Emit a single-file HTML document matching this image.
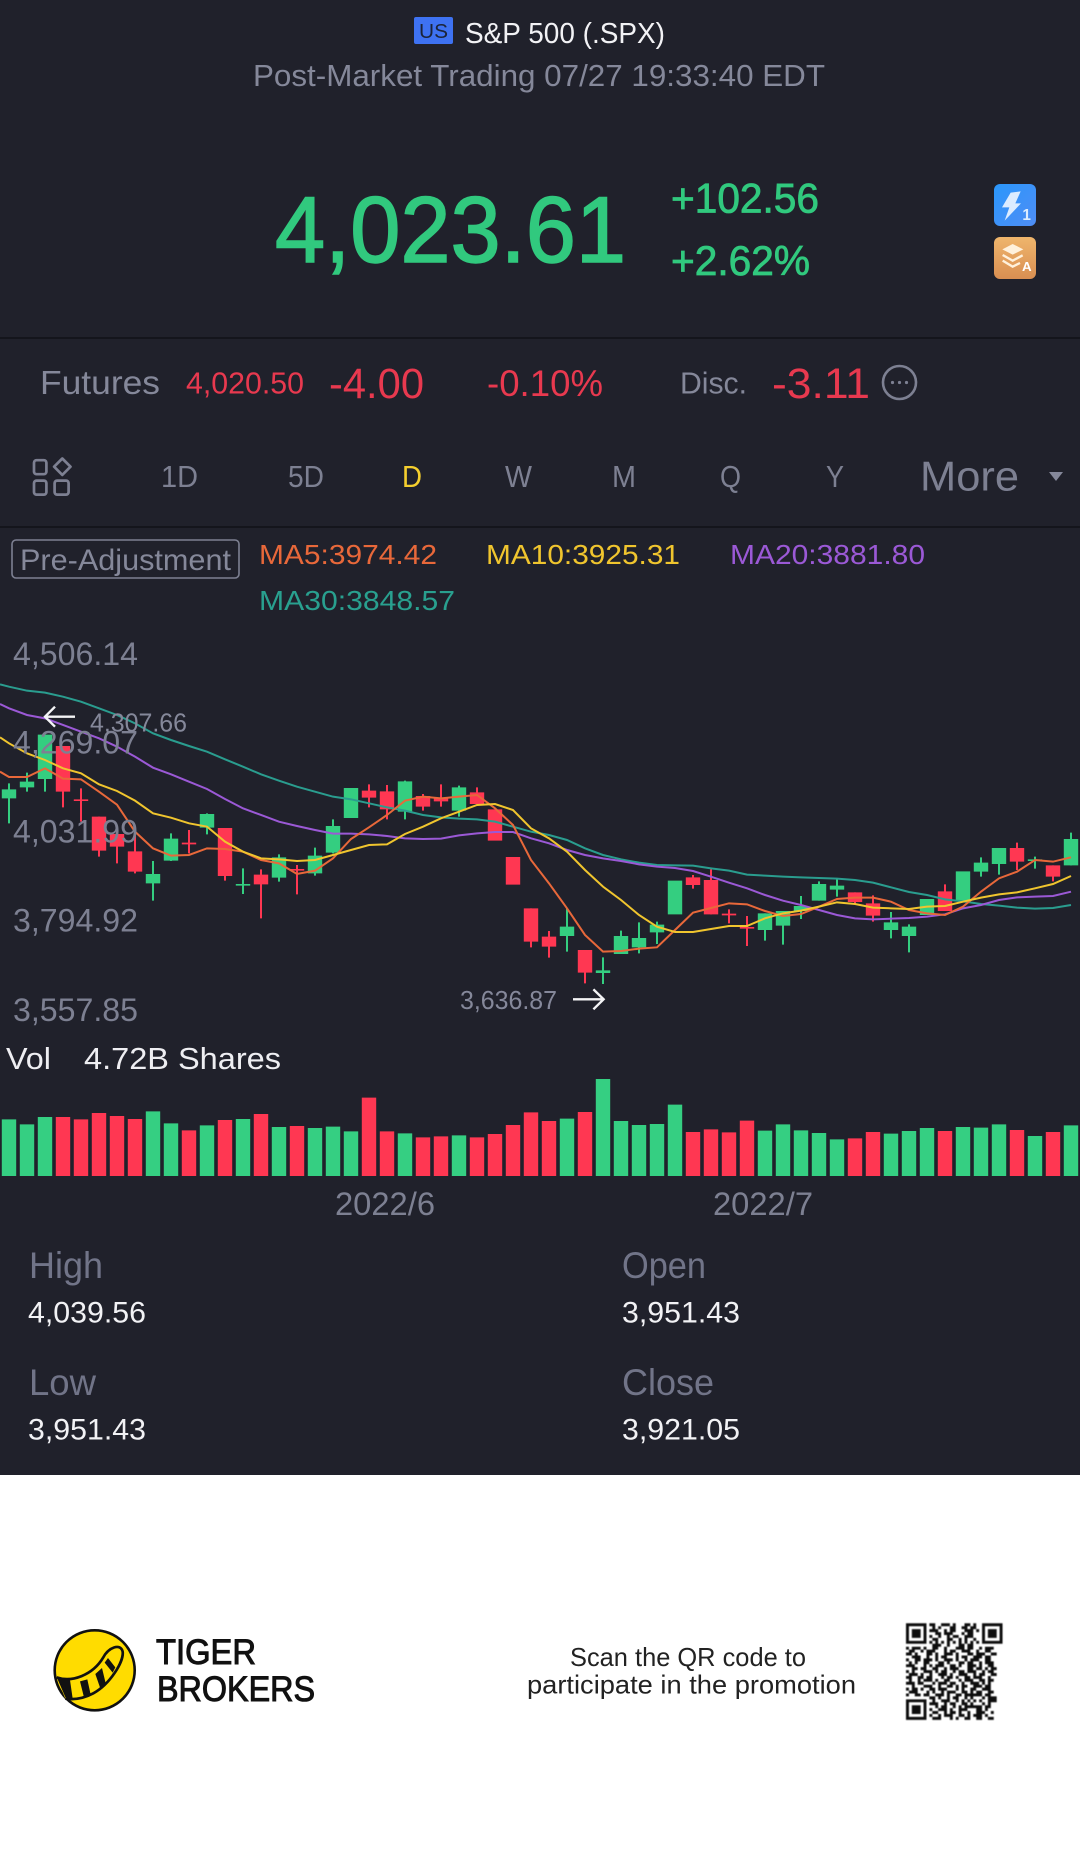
<!DOCTYPE html>
<html lang="en">
<head>
<meta charset="utf-8">
<title>S&amp;P 500 (.SPX)</title>
<style>
html,body{margin:0;padding:0;background:#fff}
svg{display:block}
text{font-family:"Liberation Sans",sans-serif}
.ve{vector-effect:non-scaling-stroke;fill:none}
</style>
</head>
<body>
<svg xmlns="http://www.w3.org/2000/svg" width="1080" height="1867" viewBox="0 0 1080 1867">
<defs>
<linearGradient id="bl" x1="0" y1="0" x2="1" y2="1"><stop offset="0" stop-color="#2a97fb"/><stop offset="1" stop-color="#4f8df5"/></linearGradient>
<linearGradient id="or" x1="0" y1="0" x2="0" y2="1"><stop offset="0" stop-color="#efb56c"/><stop offset="1" stop-color="#d98f52"/></linearGradient>
<filter id="qb" x="-5%" y="-5%" width="110%" height="110%"><feGaussianBlur stdDeviation=".14"/></filter>
</defs>
<rect width="1080" height="1867" fill="#fff"/>
<rect width="1080" height="1475" fill="#20212b"/>
<rect y="337" width="1080" height="2" fill="#14151c"/>
<rect y="526" width="1080" height="2" fill="#14151c"/>

<!-- header -->
<rect x="414" y="17" width="39" height="27" rx="2" fill="#3e72f2"/>
<text x="419" y="38" font-size="20" textLength="29" lengthAdjust="spacingAndGlyphs" fill="#1b2438">US</text>
<text x="465" y="43" font-size="29" textLength="200" lengthAdjust="spacingAndGlyphs" fill="#f2f2f5">S&amp;P 500 (.SPX)</text>
<text x="253" y="86" font-size="30.5" textLength="572" lengthAdjust="spacingAndGlyphs" fill="#85889a">Post-Market Trading 07/27 19:33:40 EDT</text>

<text x="275" y="262" font-size="94" textLength="351" lengthAdjust="spacingAndGlyphs" fill="#31c97e" stroke="#31c97e" stroke-width="1.5">4,023.61</text>
<text x="671" y="212.5" font-size="42" textLength="148" lengthAdjust="spacingAndGlyphs" fill="#31c97e" stroke="#31c97e" stroke-width=".8">+102.56</text>
<text x="671" y="275" font-size="42" textLength="139" lengthAdjust="spacingAndGlyphs" fill="#31c97e" stroke="#31c97e" stroke-width=".8">+2.62%</text>

<!-- side icons -->
<rect x="994" y="184" width="42" height="42" rx="6" fill="url(#bl)"/>
<rect x="994" y="237" width="42" height="42" rx="6" fill="url(#or)"/>
<g transform="translate(970,170) scale(.3333)">
<path d="M122 68L152 64L136 100L153 100L104 152L118 112L96 112Z" fill="#dcecff"/>
<text x="157" y="150" font-size="46" font-weight="bold" fill="#dcecff">1</text>
<path d="M128 222L160 238L128 254L97 238Z" fill="#fff1dc"/>
<path d="M98 255L128 272L158 256M98 272L128 290L150 279" stroke="#fff1dc" stroke-width="7" fill="none"/>
<text x="156" y="303" font-size="40" font-weight="bold" fill="#fff">A</text>
</g>

<!-- futures row -->
<text x="40" y="394" font-size="33" textLength="120" lengthAdjust="spacingAndGlyphs" fill="#85889a">Futures</text>
<text x="186" y="393.5" font-size="31" textLength="118" lengthAdjust="spacingAndGlyphs" fill="#e8394f">4,020.50</text>
<text x="329" y="398" font-size="43" textLength="95" lengthAdjust="spacingAndGlyphs" fill="#e8394f">-4.00</text>
<text x="487" y="396" font-size="37" textLength="116" lengthAdjust="spacingAndGlyphs" fill="#e8394f">-0.10%</text>
<text x="680" y="393.5" font-size="31" textLength="67" lengthAdjust="spacingAndGlyphs" fill="#85889a">Disc.</text>
<text x="772" y="398" font-size="43" textLength="98" lengthAdjust="spacingAndGlyphs" fill="#e8394f">-3.11</text>
<circle cx="899.5" cy="382.5" r="16.5" fill="none" stroke="#7d8092" stroke-width="2.6"/>
<circle cx="892.5" cy="382.5" r="1.6" fill="#7d8092"/><circle cx="899.5" cy="382.5" r="1.6" fill="#7d8092"/><circle cx="906.5" cy="382.5" r="1.6" fill="#7d8092"/>

<!-- period tabs -->
<g fill="none" stroke="#7d8092" stroke-width="2.7">
<rect x="34" y="460.2" width="12.4" height="14" rx="2.5"/>
<path d="M62.3 458.5L70.5 466.7L62.3 474.9L54.1 466.7Z" stroke-linejoin="round"/>
<rect x="34" y="480.6" width="12.4" height="14" rx="2.5"/>
<rect x="54.6" y="480.6" width="14" height="14" rx="2.5"/>
</g>
<text x="161" y="487" font-size="31" textLength="37" lengthAdjust="spacingAndGlyphs" fill="#7d8092">1D</text>
<text x="288" y="487" font-size="31" textLength="36" lengthAdjust="spacingAndGlyphs" fill="#7d8092">5D</text>
<text x="402" y="487" font-size="31" textLength="20" lengthAdjust="spacingAndGlyphs" fill="#f5cf2e">D</text>
<text x="505" y="487" font-size="31" textLength="27" lengthAdjust="spacingAndGlyphs" fill="#7d8092">W</text>
<text x="612" y="487" font-size="31" textLength="24" lengthAdjust="spacingAndGlyphs" fill="#7d8092">M</text>
<text x="720" y="487" font-size="31" textLength="21" lengthAdjust="spacingAndGlyphs" fill="#7d8092">Q</text>
<text x="826" y="487" font-size="31" textLength="18" lengthAdjust="spacingAndGlyphs" fill="#7d8092">Y</text>
<text x="920" y="490.5" font-size="42" textLength="99" lengthAdjust="spacingAndGlyphs" fill="#7d8092">More</text>
<path d="M1049 472H1063L1056 481Z" fill="#85889a"/>

<!-- legend -->
<rect x="12" y="540" width="227" height="38" rx="4" fill="none" stroke="#7d8092" stroke-width="1.6"/>
<text x="20" y="570" font-size="30" textLength="211" lengthAdjust="spacingAndGlyphs" fill="#85889a">Pre-Adjustment</text>
<text x="259" y="564" font-size="28" textLength="178" lengthAdjust="spacingAndGlyphs" fill="#e8683a">MA5:3974.42</text>
<text x="486" y="564" font-size="28" textLength="194" lengthAdjust="spacingAndGlyphs" fill="#f0c52e">MA10:3925.31</text>
<text x="730" y="564" font-size="28" textLength="195" lengthAdjust="spacingAndGlyphs" fill="#9b59d6">MA20:3881.80</text>
<text x="259" y="610" font-size="28" textLength="196" lengthAdjust="spacingAndGlyphs" fill="#29a08f">MA30:3848.57</text>

<!-- candles: x in px, y in zoom units -->
<g transform="translate(0,530) scale(1,.33333)">
<path class="ve" stroke="#34ce80" stroke-width="2" d="M9 760V880M27 728V785M45 614V785M153 993V1112M171 910V993M207 850V913M243 1015V1092M279 973V1055M315 953V1037M333 868V970M405 752V868M459 767V860M567 1135V1265M603 1282V1362M621 1202V1272M639 1177V1270M657 1175V1242M765 1150V1232M783 1143V1244M801 1098V1167M819 1054V1112M837 1048V1100M891 1146V1225M909 1183V1267M981 982V1040M999 954V1034M1035 980V1016M1071 908V1006"/>
<path class="ve" stroke="#34ce80" stroke-width="14.4" d="M9 778V805M27 755V772M45 614V747M153 1032V1060M171 926V992M207 852V893M243 1062V1067M279 982V1043M315 977V1030M333 888V968M351 774V864M405 754V845M459 772V842M567 1190V1218M603 1321V1329M621 1218V1272M639 1224V1252M657 1184V1207M675 1052V1153M765 1150V1200M783 1143V1187M801 1128V1143M819 1062V1112M837 1067V1079M891 1177V1200M909 1190V1218M927 1107V1155M963 1024V1112M981 998V1025M999 954V1002M1035 988V993M1071 927V1006"/>
<path class="ve" stroke="#ff3752" stroke-width="2" d="M63 648V832M81 775V875M99 860V980M117 912V1000M135 900V1030M189 900V970M225 894V1052M261 1018V1165M297 1005V1093M369 763V832M387 765V868M423 792V842M441 763V830M477 772V822M531 1135V1252M549 1203V1283M585 1260V1360M693 1035V1076M711 1018V1153M729 1138V1180M747 1158V1248M855 1087V1120M873 1096V1175M945 1063V1143M1017 938V1020M1053 1006V1054"/>
<path class="ve" stroke="#ff3752" stroke-width="14.4" d="M63 648V785M81 808V813M99 860V962M117 912V950M135 964V1025M189 938V943M225 894V1038M261 1034V1063M297 1017V1022M369 782V803M387 784V838M423 798V830M441 803V814M477 787V822M495 838V932M513 981V1064M531 1135V1235M549 1220V1250M585 1260V1328M693 1042V1065M711 1050V1153M729 1151V1156M747 1191V1196M855 1087V1116M873 1120V1157M945 1084V1143M1017 954V995M1053 1006V1040"/>
<polyline class="ve" stroke="#2a9d8f" stroke-width="2" points="0,463 9,470 27,482 45,488 63,500 81,515 99,535 117,555 135,580 153,610 171,630 189,648 207,665 225,688 243,710 261,733 279,752 297,770 315,785 333,800 351,808 369,820 387,832 405,842 423,855 441,862 459,866 477,868 495,875 513,890 531,905 549,915 567,930 585,955 603,975 621,988 639,998 657,1005 675,1006 693,1007 711,1015 729,1022 747,1034 765,1037 783,1040 801,1042 819,1044 837,1046 855,1050 873,1058 891,1072 909,1086 927,1095 945,1108 963,1114 981,1122 999,1127 1017,1133 1035,1136 1053,1134 1071,1125"/>
<polyline class="ve" stroke="#9b59d6" stroke-width="2" points="0,522 9,535 27,555 45,565 63,585 81,605 99,625 117,650 135,680 153,713 171,733 189,755 207,777 225,807 243,835 261,855 279,875 297,888 315,900 333,911 351,911 369,913 387,918 405,925 423,927 441,926 459,916 477,910 495,906 513,906 531,925 549,940 567,960 585,975 603,985 621,993 639,1003 657,1010 675,1014 693,1023 711,1040 729,1058 747,1075 765,1095 783,1112 801,1125 819,1140 837,1155 855,1165 873,1168 891,1166 909,1164 927,1160 945,1153 963,1135 981,1125 999,1110 1017,1102 1035,1100 1053,1098 1071,1085"/>
<polyline class="ve" stroke="#e8683a" stroke-width="2" points="0,725 9,741 27,741 45,715 63,746 81,748 99,785 117,824 135,905 153,955 171,977 189,975 207,955 225,957 243,965 261,990 279,1000 297,1032 315,1022 333,985 351,927 369,892 387,855 405,812 423,800 441,805 459,800 477,795 495,835 513,885 531,990 549,1060 567,1135 585,1215 603,1265 621,1263 639,1256 657,1252 675,1200 693,1148 711,1134 729,1120 747,1123 765,1143 783,1158 801,1152 819,1130 837,1107 855,1103 873,1103 891,1115 909,1140 927,1150 945,1155 963,1130 981,1085 999,1045 1017,1025 1035,990 1053,995 1071,982"/>
<polyline class="ve" stroke="#f0c52e" stroke-width="2" points="0,622 9,640 27,670 45,690 63,715 81,730 99,763 117,783 135,812 153,850 171,863 189,880 207,890 225,935 243,965 261,985 279,988 297,993 315,990 333,975 351,960 369,945 387,943 405,912 423,890 441,865 459,845 477,825 495,822 513,840 531,895 549,925 567,965 585,1020 603,1070 621,1110 639,1155 657,1190 675,1206 693,1206 711,1197 729,1188 747,1188 765,1165 783,1150 801,1142 819,1130 837,1117 855,1122 873,1133 891,1135 909,1137 927,1130 945,1128 963,1115 981,1103 999,1093 1017,1087 1035,1075 1053,1062 1071,1038"/>
</g>

<!-- axis labels -->
<g font-size="32" fill="#7d8092">
<text x="13" y="665" textLength="125" lengthAdjust="spacingAndGlyphs">4,506.14</text>
<text x="13" y="753.5" textLength="125" lengthAdjust="spacingAndGlyphs">4,269.07</text>
<text x="13" y="842.5" textLength="125" lengthAdjust="spacingAndGlyphs">4,031.99</text>
<text x="13" y="931.5" textLength="125" lengthAdjust="spacingAndGlyphs">3,794.92</text>
<text x="13" y="1021" textLength="125" lengthAdjust="spacingAndGlyphs">3,557.85</text>
</g>
<text x="90" y="731.5" font-size="26" textLength="97" lengthAdjust="spacingAndGlyphs" fill="#85889a">4,307.66</text>
<text x="460" y="1009" font-size="26" textLength="97" lengthAdjust="spacingAndGlyphs" fill="#85889a">3,636.87</text>
<path d="M75 716.7H46M55 706.7L45 716.7L55 726.7" fill="none" stroke="#f4f4f6" stroke-width="2.4"/>
<path d="M573 999.3H603M593.4 989.3L603.6 999.3L593.4 1009.3" fill="none" stroke="#f4f4f6" stroke-width="2.4"/>

<!-- volume -->
<text x="6" y="1069" font-size="31" textLength="45" lengthAdjust="spacingAndGlyphs" fill="#eeeef2">Vol</text>
<text x="84" y="1069" font-size="31" textLength="197" lengthAdjust="spacingAndGlyphs" fill="#eeeef2">4.72B Shares</text>
<g transform="translate(0,1040) scale(1,.33333)">
<path class="ve" stroke="#35cf82" stroke-width="14.4" d="M9 238V408M27 253V408M45 231V408M153 214V408M171 250V408M207 256V408M243 237V408M279 261V408M315 264V408M333 260V408M351 274V408M405 280V408M459 286V408M567 236V408M603 117V408M621 243V408M639 255V408M657 252V408M675 194V408M765 272V408M783 253V408M801 271V408M819 279V408M837 298V408M891 281V408M909 273V408M927 264V408M963 261V408M981 263V408M999 253V408M1035 288V408M1071 256V408"/>
<path class="ve" stroke="#ff3752" stroke-width="14.4" d="M63 231V408M81 238V408M99 219V408M117 228V408M135 237V408M189 271V408M225 240V408M261 222V408M297 258V408M369 173V408M387 274V408M423 292V408M441 289V408M477 292V408M495 282V408M513 255V408M531 217V408M549 243V408M585 216V408M693 276V408M711 268V408M729 277V408M747 242V408M855 295V408M873 276V408M945 273V408M1017 270V408M1053 276V408"/>
</g>
<text x="335" y="1215" font-size="32" textLength="100" lengthAdjust="spacingAndGlyphs" fill="#7d8092">2022/6</text>
<text x="713" y="1215" font-size="32" textLength="100" lengthAdjust="spacingAndGlyphs" fill="#7d8092">2022/7</text>

<!-- stats -->
<text x="29" y="1278" font-size="37" textLength="74" lengthAdjust="spacingAndGlyphs" fill="#717488">High</text>
<text x="28" y="1322.3" font-size="30" textLength="118" lengthAdjust="spacingAndGlyphs" fill="#f2f2f5">4,039.56</text>
<text x="29" y="1395" font-size="37" textLength="67" lengthAdjust="spacingAndGlyphs" fill="#717488">Low</text>
<text x="28" y="1439.3" font-size="30" textLength="118" lengthAdjust="spacingAndGlyphs" fill="#f2f2f5">3,951.43</text>
<text x="622" y="1278" font-size="37" textLength="84" lengthAdjust="spacingAndGlyphs" fill="#717488">Open</text>
<text x="622" y="1322.3" font-size="30" textLength="118" lengthAdjust="spacingAndGlyphs" fill="#f2f2f5">3,951.43</text>
<text x="622" y="1395" font-size="37" textLength="92" lengthAdjust="spacingAndGlyphs" fill="#717488">Close</text>
<text x="622" y="1439.3" font-size="30" textLength="118" lengthAdjust="spacingAndGlyphs" fill="#f2f2f5">3,921.05</text>

<!-- footer logo -->
<circle cx="94.7" cy="1670.3" r="40" fill="#ffdc00" stroke="#111" stroke-width="2.6"/>
<g transform="translate(30,1600) scale(.33333)">
<path d="M80 232C125 248 188 226 220 172C234 143 272 128 278 155C282 185 240 252 190 280C160 296 132 300 106 296" fill="#ffdc00" stroke="#111" stroke-width="8"/>
<path d="M82 236L108 296L128 296L120 240ZM150 244L162 292L182 284L172 238ZM196 222L212 268L228 254L216 204ZM224 188L248 218L256 202L234 174Z" fill="#111"/>
</g>
<text x="156" y="1664" font-size="35" textLength="100" lengthAdjust="spacingAndGlyphs" fill="#111" stroke="#111" stroke-width="1">TIGER</text>
<text x="157" y="1701" font-size="35" textLength="158" lengthAdjust="spacingAndGlyphs" fill="#111" stroke="#111" stroke-width="1">BROKERS</text>

<text x="570" y="1666" font-size="26" textLength="236" lengthAdjust="spacingAndGlyphs" fill="#222">Scan the QR code to</text>
<text x="527" y="1693.3" font-size="26" textLength="329" lengthAdjust="spacingAndGlyphs" fill="#222">participate in the promotion</text>

<!-- QR -->
<g transform="translate(906,1623.3) scale(2.925)" filter="url(#qb)">
<path fill="#111" fill-rule="evenodd" d="M0 0h7v7h-7zM1 1v5h5v-5zM2 2h3v3h-3zM26 0h7v7h-7zM27 1v5h5v-5zM28 2h3v3h-3zM0 26h7v7h-7zM1 27v5h5v-5zM2 28h3v3h-3z"/>
<path fill="none" stroke="#111" stroke-width="1" d="M8 .5h2m2 0h3m1 0h1m3 0h2m1 0h1M9 1.5h1m1 0h1m3 0h2m2 0h2m1 0h2M8 2.5h3m2 0h1m1 0h2m3 0h3m1 0h1M10 3.5h2m1 0h3m3 0h1m1 0h2M8 4.5h1m2 0h1m2 0h1m1 0h2m2 0h3M9 5.5h2m3 0h2m2 0h1m1 0h1m2 0h1M8 6.5h1m1 0h1m1 0h1m1 0h1m1 0h1m1 0h1m1 0h1m1 0h1m1 0h1M9 7.5h3m2 0h1m3 0h2m1 0h2M0 8.5h1m1 0h3m1 0h1m2 0h2m2 0h1m3 0h3m1 0h2m2 0h1m1 0h3M1 9.5h2m2 0h1m1 0h3m3 0h1m1 0h2m2 0h3m2 0h1m2 0h2M0 10.5h2m1 0h1m3 0h2m1 0h1m2 0h3m1 0h1m3 0h2m1 0h3m2 0h2M2 11.5h3m2 0h1m2 0h1m1 0h2m3 0h1m1 0h2m2 0h3m1 0h2M0 12.5h1m2 0h2m1 0h3m1 0h1m2 0h3m1 0h1m2 0h1m1 0h3m2 0h2M1 13.5h1m1 0h1m2 0h2m3 0h2m1 0h1m3 0h2m1 0h2m2 0h1m1 0h3M0 14.5h3m3 0h1m1 0h1m1 0h3m2 0h2m1 0h1m2 0h3m1 0h1m2 0h2M2 15.5h2m1 0h2m2 0h2m2 0h1m1 0h3m3 0h2m1 0h2m1 0h1m1 0h2M0 16.5h1m1 0h1m3 0h3m1 0h1m1 0h2m2 0h1m1 0h2m1 0h3m2 0h1m1 0h2M1 17.5h3m1 0h1m2 0h1m2 0h3m1 0h1m2 0h3m2 0h1m1 0h2m2 0h2M0 18.5h2m2 0h2m1 0h2m3 0h1m1 0h2m1 0h1m2 0h2m1 0h3m2 0h1M1 19.5h1m2 0h1m1 0h3m1 0h1m2 0h2m3 0h1m1 0h3m2 0h2m1 0h2M0 20.5h3m1 0h2m3 0h1m1 0h3m1 0h2m2 0h1m2 0h3m1 0h1m1 0h1M2 21.5h1m3 0h3m2 0h1m2 0h2m1 0h1m1 0h2m2 0h3m1 0h2M0 22.5h1m1 0h2m1 0h1m2 0h2m1 0h3m3 0h1m1 0h1m2 0h2m2 0h3M1 23.5h3m3 0h1m1 0h1m2 0h1m1 0h3m2 0h2m1 0h1m1 0h2m2 0h2M0 24.5h1m2 0h2m1 0h2m2 0h3m1 0h1m2 0h2m1 0h6m1 0h2M8 25.5h2m1 0h1m2 0h1m1 0h2m2 0h1m1 0h1m3 0h1m1 0h3M9 26.5h1m2 0h3m2 0h1m1 0h1m1 0h1m1 0h1m1 0h1m2 0h3M8 27.5h3m2 0h1m1 0h2m2 0h2m1 0h1m3 0h1m1 0h1M10 28.5h1m1 0h2m2 0h1m1 0h1m1 0h6m1 0h2M8 29.5h1m2 0h3m1 0h1m2 0h3m3 0h2m1 0h1M9 30.5h2m2 0h1m1 0h2m1 0h1m2 0h1m2 0h3m2 0h1M8 31.5h1m2 0h1m1 0h3m2 0h2m1 0h1m1 0h3m1 0h1M9 32.5h3m3 0h1m1 0h1m2 0h2m2 0h2m2 0h2"/>
</g>
</svg>
</body>
</html>
